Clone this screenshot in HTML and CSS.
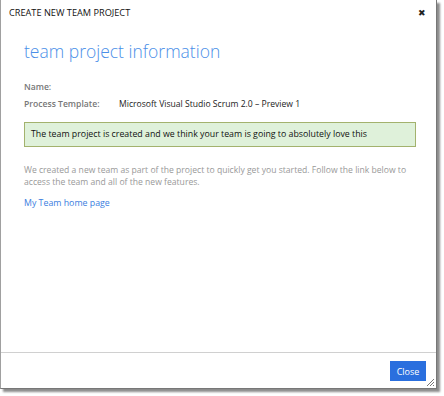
FILE: index.html
```html
<!DOCTYPE html>
<html lang="en">
<head>
    <meta charset="UTF-8">
    <title>Create New Team Project</title>
    <link rel="stylesheet" href="styles.css">
</head>
<body>
    <div class="dialog">
        <div class="titlebar">
            <span class="title">CREATE NEW TEAM PROJECT</span>
            <span class="close-x">&#x2716;</span>
        </div>
        <div class="content">
            <h1>team project information</h1>
            <div class="info-row">
                <div class="info-label">Name:</div>
                <div class="info-value"></div>
            </div>
            <div class="info-row">
                <div class="info-label">Process Template:</div>
                <div class="info-value">Microsoft Visual Studio Scrum 2.0 – Preview 1</div>
            </div>
            <div class="success-box">The team project is created and we think your team is going to absolutely love this</div>
            <p class="note">We created a new team as part of the project to quickly get you started. Follow the link below to access the team and all of the new features.</p>
            <a class="team-link" href="#">My Team home page</a>
        </div>
        <div class="footer">
            <button class="btn-close">Close</button>
            <svg class="grip" width="9" height="9" viewBox="0 0 9 9">
                <path d="M8 1 L1 8 M8 4 L4 8 M8 7 L7 8" stroke="#777" stroke-width="1"/>
            </svg>
        </div>
    </div>
</body>
</html>
```

FILE: styles.css
```css
body {
    margin: 0;
    width: 444px;
    height: 396px;
    background-color: #fff;
    font-family: 'Open Sans', 'Liberation Sans', sans-serif;
    color: #333;
}
.dialog {
    width: 435px;
    height: 388px;
    background-color: #fff;
    border-left: 1px solid #a0a0a0;
    border-right: 1px solid #777;
    border-bottom: 1px solid #777;
    box-shadow: 3px 3px 2px rgba(0,0,0,0.45);
    display: flex;
    flex-direction: column;
    position: relative;
}
.titlebar {
    display: flex;
    justify-content: space-between;
    align-items: center;
    padding: 5px 10px 0 8px;
    height: 14px;
}
.title {
    font-size: 9.2px;
    color: #111;
}
.close-x {
    font-size: 9px;
    color: #222;
}
.content {
    flex: 1;
    padding: 20px 20px 0 23px;
}
h1 {
    margin: 0 0 16px 0;
    font-size: 17.5px;
    font-weight: 300;
    color: #4b8fe8;
}
.info-row {
    display: flex;
    font-size: 8.6px;
    height: 16px;
    align-items: center;
}
.info-row + .info-row {
    margin-top: 1px;
}
.info-label {
    width: 95px;
    color: #777;
    font-weight: 600;
}
.info-value {
    color: #222;
}
.success-box {
    margin-top: 10px;
    background-color: #dff1da;
    border: 1px solid #a3b26d;
    padding: 5px 6px 6px 6px;
    font-size: 8.8px;
    color: #111;
}
.note {
    margin: 17px 0 1px 0;
    font-size: 8.6px;
    line-height: 12px;
    color: #999;
}
.team-link {
    font-size: 8.8px;
    color: #3a7ee0;
    text-decoration: none;
}
.footer {
    border-top: 1px solid #d0d0d0;
    display: flex;
    justify-content: flex-end;
    align-items: flex-start;
    padding: 8px 10px 0 0;
    box-sizing: border-box;
    height: 36px;
}
.btn-close {
    background-color: #2a6fde;
    color: #fff;
    border: none;
    font-family: 'Open Sans', 'Liberation Sans', sans-serif;
    font-size: 9px;
    width: 36px;
    height: 20px;
    padding: 0;
}
.grip {
    position: absolute;
    right: 1px;
    bottom: 1px;
}
```
